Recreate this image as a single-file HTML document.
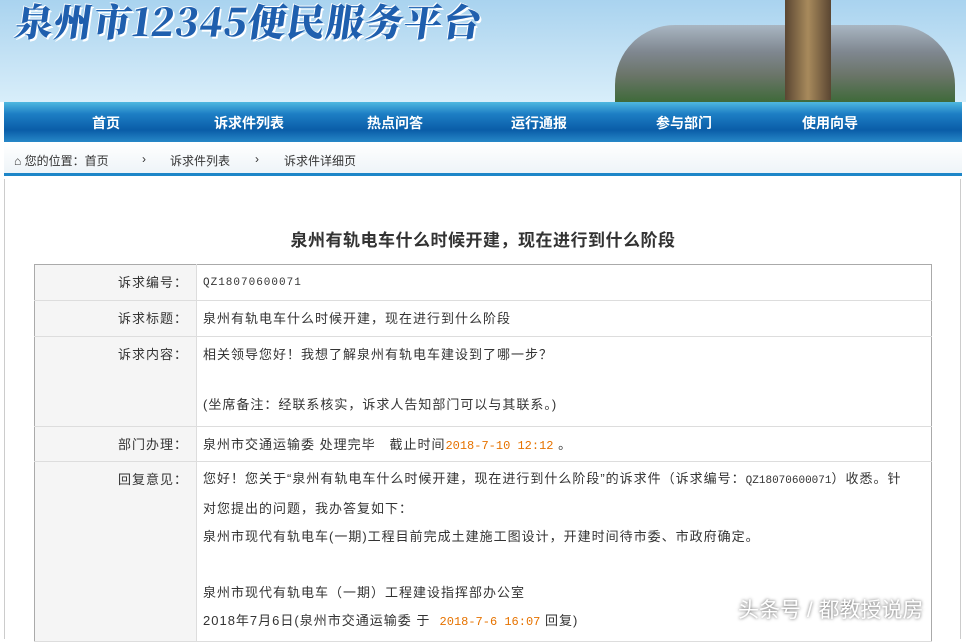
<!DOCTYPE html>
<html><head><meta charset="utf-8"><style>
*{margin:0;padding:0;box-sizing:border-box}
body{width:966px;height:630px;overflow:hidden;background:#fff;font-family:"Liberation Sans","Noto Sans CJK SC",sans-serif;font-size:13px;color:#333;position:relative}
#hd{position:absolute;left:0;top:0;width:966px;height:102px;background:linear-gradient(180deg,#a9d3ef 0%,#c6e3f5 60%,#d8eefa 100%)}
#logo{position:absolute;left:16px;top:-8px;font-family:"Noto Serif CJK SC","WenQuanYi Zen Hei",serif;font-size:38px;font-weight:900;color:#1f5fae;letter-spacing:1px;text-shadow:2px 2px 0 #fff,-1px -1px 0 #fff;transform:skewX(-8deg)}
#city{position:absolute;left:615px;top:25px;width:340px;height:77px;background:linear-gradient(180deg,#a9b6c2 0%,#7f8790 35%,#6b7569 65%,#3f6a3a 100%);border-radius:60px 60px 0 0}
#tower{position:absolute;left:785px;top:0;width:46px;height:100px;background:linear-gradient(90deg,#5a4632,#a88a5c,#5a4632)}
#nav{position:absolute;left:4px;top:102px;width:958px;height:40px;background:linear-gradient(180deg,#4fb8e0 0%,#1d7ec4 30%,#0a5da8 70%,#2788c8 100%)}
#nav span{position:absolute;top:11px;color:#fff;font-weight:bold;font-size:14px}
#bc{position:absolute;left:4px;top:143px;width:958px;height:33px;background:linear-gradient(180deg,#fff,#eef4f8);border-bottom:3px solid #1d86c8;font-size:12px;color:#333}
#bc span{position:absolute;top:9px}
#main{position:absolute;left:4px;top:179px;width:957px;height:460px;border-left:1px solid #ccc;border-right:1px solid #ccc}
h1{position:absolute;left:0;width:966px;top:226px;text-align:center;font-size:17px;font-weight:bold;color:#333;letter-spacing:0.5px}
table{position:absolute;left:34px;top:264px;width:898px;border-collapse:collapse;border:1px solid #aaa}
td{border-bottom:1px solid #ddd;vertical-align:top;font-size:13px;line-height:20px}
td.l{width:162px;background:#f5f5f5;text-align:right;padding:8px 8px 0 0;border-right:1px solid #ddd;letter-spacing:1px}
td.r{padding:8px 0 0 6px;letter-spacing:1px;white-space:nowrap}
.o{color:#e67300;font-family:"Liberation Mono",monospace;font-size:12px;letter-spacing:0}
.m{font-family:"Liberation Mono",monospace;font-size:11px;letter-spacing:0}
#wm{position:absolute;left:738px;top:594px;color:#fff;font-size:21px;text-shadow:0 0 3px #555}
</style></head><body>
<div id="hd"><div id="city"></div><div id="tower"></div><div id="logo">泉州市12345便民服务平台</div></div>
<div id="nav"><span style="left:88px">首页</span><span style="left:210px">诉求件列表</span><span style="left:363px">热点问答</span><span style="left:507px">运行通报</span><span style="left:652px">参与部门</span><span style="left:798px">使用向导</span></div>
<div id="bc"><span style="left:10px">⌂ 您的位置：首页</span><span style="left:138px">›</span><span style="left:166px">诉求件列表</span><span style="left:251px">›</span><span style="left:280px">诉求件详细页</span></div>
<div id="main"></div>
<h1>泉州有轨电车什么时候开建，现在进行到什么阶段</h1>
<table>
<tr style="height:36px"><td class="l">诉求编号：</td><td class="r m">QZ18070600071</td></tr>
<tr style="height:36px"><td class="l">诉求标题：</td><td class="r">泉州有轨电车什么时候开建，现在进行到什么阶段</td></tr>
<tr style="height:90px"><td class="l">诉求内容：</td><td class="r">相关领导您好！我想了解泉州有轨电车建设到了哪一步？<br><br><div style="margin-top:10px">(坐席备注：经联系核实，诉求人告知部门可以与其联系。)</div></td></tr>
<tr style="height:35px"><td class="l">部门办理：</td><td class="r">泉州市交通运输委 处理完毕 &nbsp; 截止时间<span class="o">2018-7-10 12:12</span> 。</td></tr>
<tr style="height:180px"><td class="l">回复意见：</td><td class="r" style="line-height:28px;padding-top:3px">您好！您关于“泉州有轨电车什么时候开建，现在进行到什么阶段”的诉求件（诉求编号：<span class="m">QZ18070600071</span>）收悉。针<br>对您提出的问题，我办答复如下：<br>泉州市现代有轨电车(一期)工程目前完成土建施工图设计，开建时间待市委、市政府确定。<br><br>泉州市现代有轨电车（一期）工程建设指挥部办公室<br>2018年7月6日(泉州市交通运输委 于 &nbsp;<span class="o">2018-7-6 16:07</span> 回复)</td></tr>
</table>
<div id="wm">头条号 / 都教授说房</div>
</body></html>
